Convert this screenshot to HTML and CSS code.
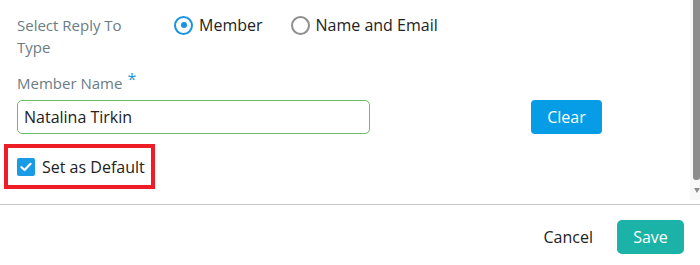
FILE: index.html
```html
<!DOCTYPE html>
<html lang="en">
<head>
  <meta charset="UTF-8" />
  <title>Reply To</title>
  <link rel="stylesheet" href="styles.css">
</head>
<body>
  <div class="dialog">
    <div class="dialog-body">
      <div class="form">
        <div class="row-type">
          <div class="field-label type-label">Select Reply To Type</div>
          <div class="radios">
            <label class="radio-opt"><span class="radio checked"></span>Member</label>
            <label class="radio-opt"><span class="radio"></span>Name and Email</label>
          </div>
        </div>

        <div class="field-label name-label">Member Name<span class="req">*</span></div>
        <div class="name-row">
          <input type="text" class="name-input" value="Natalina Tirkin">
          <button class="clear-btn">Clear</button>
        </div>

        <!-- highlighted default option -->
        <div class="default-box">
          <span class="checkbox">
            <svg width="12" height="10" viewBox="0 0 12 10"><path d="M1.5 5.2 L4.6 8 L10.5 1.8" fill="none" stroke="#fff" stroke-width="2.2" stroke-linecap="round" stroke-linejoin="round"/></svg>
          </span>
          <span class="default-text">Set as Default</span>
        </div>
      </div>

      <div class="scrollbar">
        <div class="thumb"></div>
        <div class="arrow"></div>
      </div>
    </div>

    <div class="dialog-footer">
      <span class="cancel">Cancel</span>
      <button class="save-btn">Save</button>
    </div>
  </div>
</body>
</html>
```

FILE: styles.css
```css
* {
  margin: 0;
  padding: 0;
  box-sizing: border-box;
}
html, body {
  width: 700px;
  height: 265px;
  overflow: hidden;
  background: #fff;
  font-family: "Open Sans", "Noto Sans", sans-serif;
  color: #222;
}
.dialog {
  width: 700px;
  height: 265px;
}
.dialog-body {
  display: flex;
  height: 205px;
  border-bottom: 1px solid #c6c6c6;
}
.form {
  flex: 1;
  padding: 14px 0 0 17px;
}
.field-label {
  font-size: 15px;
  line-height: 22px;
  color: #6b7c84;
}
.row-type {
  display: flex;
  align-items: flex-start;
}
.type-label {
  width: 125px;
  margin-right: 32px;
}
.radios {
  display: flex;
  align-items: center;
  gap: 28px;
  height: 22px;
}
.radio-opt {
  display: flex;
  align-items: center;
  gap: 6px;
  font-size: 16px;
  color: #222;
}
.radio {
  width: 19px;
  height: 19px;
  border: 2px solid #8e8e8e;
  border-radius: 50%;
  display: flex;
  align-items: center;
  justify-content: center;
}
.radio.checked {
  border-color: #1a94e0;
}
.radio.checked::after {
  content: "";
  width: 6px;
  height: 6px;
  border-radius: 50%;
  background: #1a94e0;
}
.name-label {
  margin-top: 14px;
  height: 22px;
}
.req {
  color: #1a9be6;
  font-size: 16px;
  line-height: 0;
  margin-left: 5px;
  vertical-align: 4px;
}
.name-row {
  display: flex;
  align-items: center;
  margin-top: 6px;
}
.name-input {
  width: 353px;
  height: 34px;
  border: 1px solid #6cbd68;
  border-radius: 5px;
  padding: 0 6px;
  font-family: inherit;
  font-size: 16px;
  color: #222;
  outline: none;
}
.clear-btn {
  margin-left: 161px;
  width: 71px;
  height: 34px;
  border: none;
  border-radius: 4px;
  background: #069de6;
  color: #fff;
  font-family: inherit;
  font-size: 16px;
}
.default-box {
  display: flex;
  align-items: center;
  gap: 7px;
  width: 151px;
  height: 45px;
  margin: 10px 0 0 -13px;
  padding-left: 9px;
  border: 4px solid #ee1c25;
}
.checkbox {
  width: 18px;
  height: 18px;
  border-radius: 2px;
  background: #1a9be6;
  display: flex;
  align-items: center;
  justify-content: center;
}
.default-text {
  font-size: 16px;
  color: #222;
}
.scrollbar {
  width: 10px;
  height: 200px;
  background: #f8f8f8;
  display: flex;
  flex-direction: column;
  align-items: flex-end;
}
.thumb {
  width: 7px;
  height: 180px;
  background: #8d8d8d;
  border-radius: 0 0 3px 3px;
}
.arrow {
  width: 0;
  height: 0;
  margin-top: 8px;
  border-left: 3.5px solid transparent;
  border-right: 3.5px solid transparent;
  border-top: 5px solid #8d8d8d;
}
.dialog-footer {
  display: flex;
  justify-content: flex-end;
  align-items: center;
  gap: 24px;
  padding: 15px 16px 0 0;
}
.cancel {
  font-size: 16px;
  color: #222;
}
.save-btn {
  width: 67px;
  height: 34px;
  border: none;
  border-radius: 5px;
  background: #1bb3a7;
  color: #fff;
  font-family: inherit;
  font-size: 16px;
}
```
